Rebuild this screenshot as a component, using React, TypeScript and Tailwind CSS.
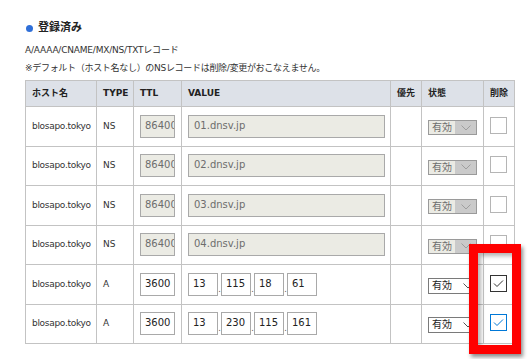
import React from 'react'

const font = { fontFamily: '"DejaVu Sans", "Noto Sans CJK JP", sans-serif' }

type Row = {
    host: string
    type: string
    ttl: string
    value?: string
    ip?: string[]
    locked: boolean
    check?: 'dark' | 'blue'
}

const rows: Row[] = [
    { host: 'blosapo.tokyo', type: 'NS', ttl: '86400', value: '01.dnsv.jp', locked: true },
    { host: 'blosapo.tokyo', type: 'NS', ttl: '86400', value: '02.dnsv.jp', locked: true },
    { host: 'blosapo.tokyo', type: 'NS', ttl: '86400', value: '03.dnsv.jp', locked: true },
    { host: 'blosapo.tokyo', type: 'NS', ttl: '86400', value: '04.dnsv.jp', locked: true },
    { host: 'blosapo.tokyo', type: 'A', ttl: '3600', ip: ['13', '115', '18', '61'], locked: false, check: 'dark' },
    { host: 'blosapo.tokyo', type: 'A', ttl: '3600', ip: ['13', '230', '115', '161'], locked: false, check: 'blue' },
]

function StatusSelect({ locked }: { locked: boolean }) {
    if (locked) {
        return (
            <div className="flex h-[15px] w-[49px] border border-[#9a9a9a] bg-[#ebebe4] text-[10px] leading-[13px] text-[#6d6d6d]">
                <span className="flex-1 pl-[3px]">有効</span>
                <span className="flex w-[21px] items-center justify-center bg-[#cacaca]">
                    <svg width="10" height="6" viewBox="0 0 10 6" fill="none" stroke="#9e9e9e" strokeWidth="1">
                        <path d="M0.5 0.5 L5 5 L9.5 0.5" />
                    </svg>
                </span>
            </div>
        )
    }
    return (
        <div className="flex h-[16px] w-[49px] border border-[#7a7a7a] bg-white text-[10px] leading-[14px] text-[#222]">
            <span className="flex-1 pl-[3px]">有効</span>
            <span className="flex w-[17px] items-center justify-center">
                <svg width="10" height="6" viewBox="0 0 10 6" fill="none" stroke="#555" strokeWidth="1">
                    <path d="M0.5 0.5 L5 5 L9.5 0.5" />
                </svg>
            </span>
        </div>
    )
}

function CheckBox({ check }: { check?: 'dark' | 'blue' }) {
    const border = check === 'dark' ? 'border-[#333]' : check === 'blue' ? 'border-[#0078d7]' : 'border-[#b5b5b5]'
    const stroke = check === 'dark' ? '#333' : '#0078d7'
    return (
        <div className={`flex h-[17px] w-[17px] items-center justify-center border bg-white ${border}`}>
            {check && (
                <svg width="11" height="9" viewBox="0 0 11 9" fill="none" stroke={stroke} strokeWidth="1">
                    <path d="M1 4.5 L4 7.5 L10 1.5" />
                </svg>
            )}
        </div>
    )
}

export default function App() {
    return (
        <div className="relative h-[359px] w-[531px] bg-white pl-[25px] pt-[20px] text-[#333]" style={font}>
            <div className="flex h-4 items-center">
                <span className="ml-[1px] h-[7px] w-[7px] rounded-full bg-[#2f6fd8]" />
                <span className="ml-[5px] text-[11px] font-bold leading-4 text-[#222]">登録済み</span>
            </div>
            <p className="mt-[7px] text-[9px] leading-[14px] tracking-[-0.2px]">A/AAAA/CNAME/MX/NS/TXTレコード</p>
            <p className="mt-[4px] text-[9px] leading-[14px] tracking-[-0.3px]">※デフォルト（ホスト名なし）のNSレコードは削除/変更がおこなえません。</p>

            <table className="mt-[5px] w-[489px] table-fixed border-collapse text-[9px]">
                <colgroup>
                    <col className="w-[71px]" />
                    <col className="w-[37px]" />
                    <col className="w-[48px]" />
                    <col className="w-[209px]" />
                    <col className="w-[31px]" />
                    <col className="w-[62px]" />
                    <col className="w-[31px]" />
                </colgroup>
                <thead>
                    <tr className="h-[26px] bg-[#dde1e8] text-left font-bold text-[#222]">
                        {['ホスト名', 'TYPE', 'TTL', 'VALUE', '優先', '状態', '削除'].map((h) => (
                            <th key={h} className="border border-[#c3c3c3] px-[6px] py-0 font-bold">
                                {h}
                            </th>
                        ))}
                    </tr>
                </thead>
                <tbody>
                    {rows.map((r, i) => (
                        <tr key={i} className="h-[39.5px]">
                            <td className="whitespace-nowrap border border-[#c3c3c3] pl-[6px] tracking-[-0.3px]">{r.host}</td>
                            <td className="border border-[#c3c3c3] pl-[6px]">{r.type}</td>
                            <td className="border border-[#c3c3c3] pl-[6px]">
                                {/* the disabled TTL field is narrower than its value, as in the original form */}
                                <div
                                    className={`h-[23px] w-[35px] overflow-hidden whitespace-nowrap border pl-[4px] text-[10px] leading-[20px] ${
                                        r.locked ? 'border-[#a9a9a9] bg-[#ebebe4] text-[#6d6d6d]' : 'border-[#a9a9a9] bg-white text-[#222]'
                                    }`}
                                >
                                    {r.ttl}
                                </div>
                            </td>
                            <td className="border border-[#c3c3c3] pl-[6px]">
                                {r.value ? (
                                    <div className="h-[23px] w-[197px] border border-[#a9a9a9] bg-[#ebebe4] px-[5px] text-[10px] leading-[20px] text-[#6d6d6d]">
                                        {r.value}
                                    </div>
                                ) : (
                                    <div className="flex items-end">
                                        {r.ip!.map((p, j) => (
                                            <React.Fragment key={j}>
                                                {j > 0 && <span className="w-[3px] text-center text-[8px] leading-[12px] text-[#555]">.</span>}
                                                <div className="h-[23px] w-[30px] border border-[#a9a9a9] bg-white px-[4px] text-[10px] leading-[20px] text-[#222]">
                                                    {p}
                                                </div>
                                            </React.Fragment>
                                        ))}
                                    </div>
                                )}
                            </td>
                            <td className="border border-[#c3c3c3]" />
                            <td className="border border-[#c3c3c3] pl-[6px]">
                                <div className="mt-[3px]">
                                    <StatusSelect locked={r.locked} />
                                </div>
                            </td>
                            <td className="border border-[#c3c3c3] pl-[6px]">
                                <div className="-mt-[2px]">
                                    <CheckBox check={r.check} />
                                </div>
                            </td>
                        </tr>
                    ))}
                </tbody>
            </table>

            <div className="absolute left-[469px] top-[244px] h-[110px] w-[52px] border-[9px] border-[#ff0000] shadow-[2px_3px_4px_rgba(0,0,0,0.45),inset_3px_3px_4px_rgba(0,0,0,0.3)]" />
        </div>
    )
}
